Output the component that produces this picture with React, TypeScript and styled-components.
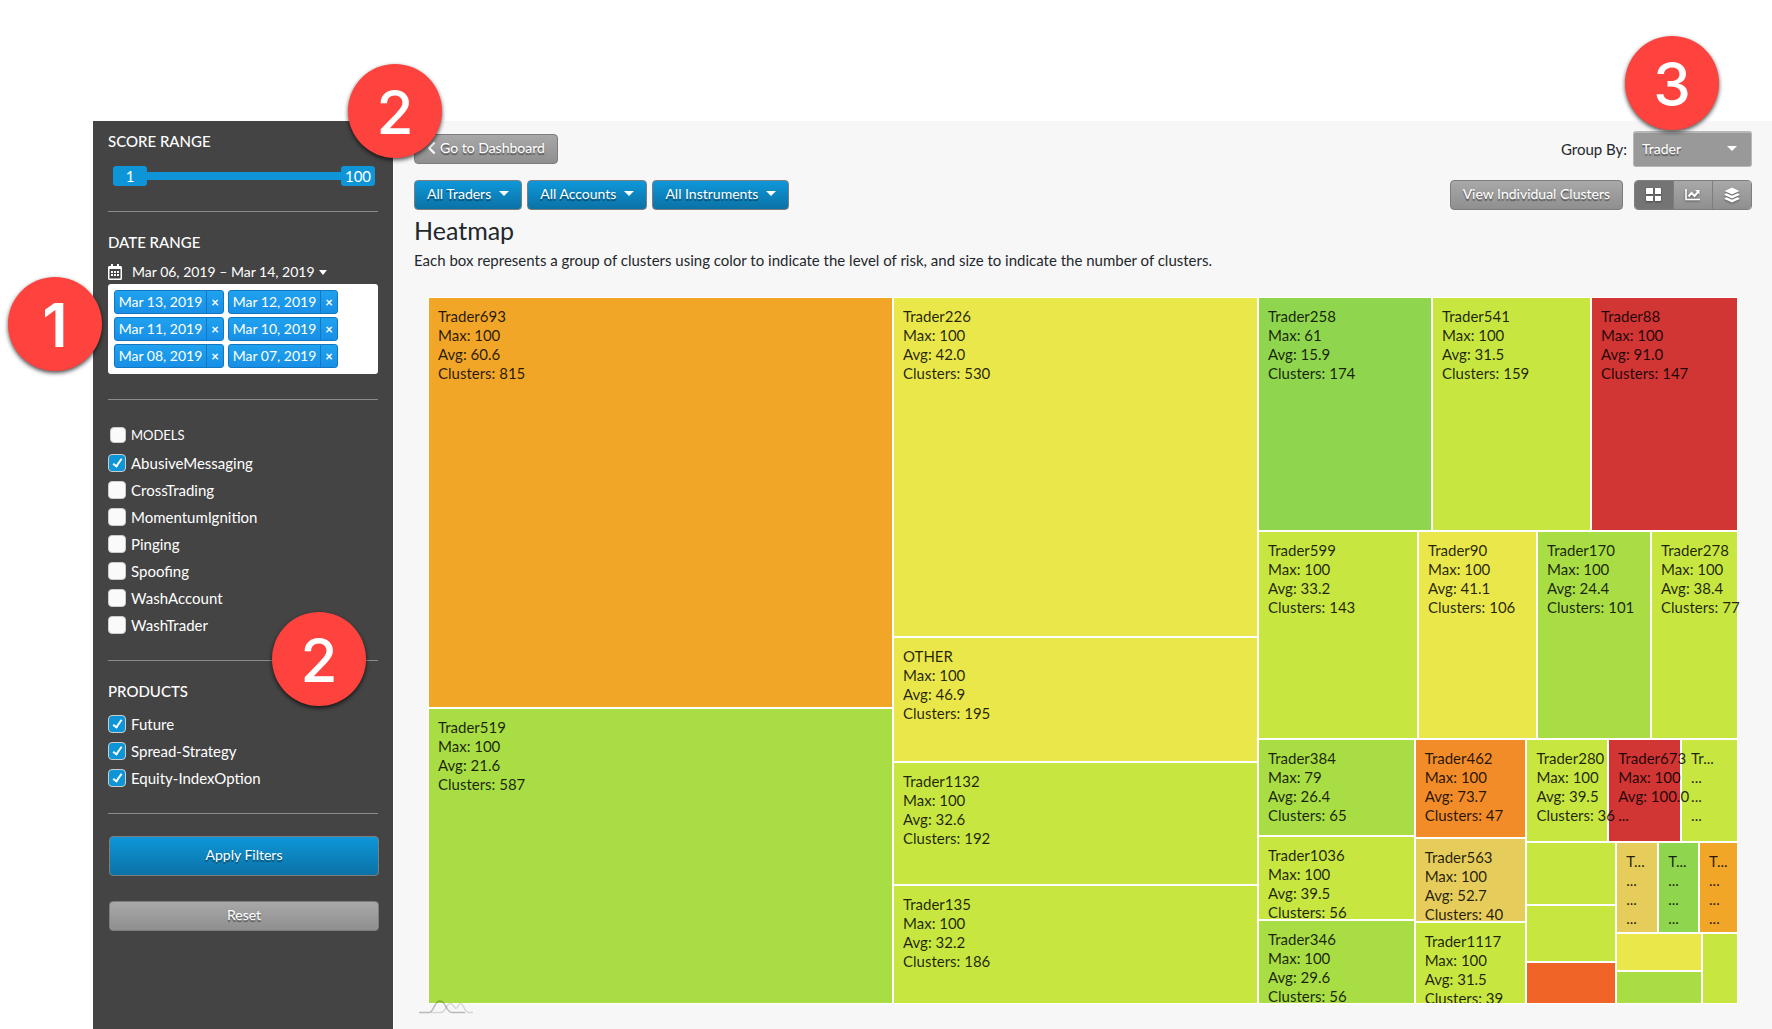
import React, { useState } from "react";
import styled, { createGlobalStyle, css } from "styled-components";
import { FaChevronLeft, FaRegCalendarAlt } from "react-icons/fa";

const GlobalStyle = createGlobalStyle`
  *, *::before, *::after { box-sizing: border-box; }
  body {
    margin: 0;
    background: #fff;
    color: #1f282c;
    font: 16px/20px Lato, "Open Sans", sans-serif;
  }
  button, input, select { font: inherit; }
`;

const Page = styled.div`
  position: relative;
  display: flex;
  min-height: 100vh;
  padding: 121px 0 0 93px;
  overflow: hidden;
`;

/* ---------- sidebar ---------- */

const Sidebar = styled.aside`
  flex: 0 0 300px;
  padding: 10px 15px;
  background: #444;
  color: #fff;
`;

const Section = styled.section`
  padding-bottom: 25px;
  margin-bottom: 20px;
  border-bottom: 1px solid #8c8c8c;
`;

const SectionTitle = styled.h2`
  margin: 0;
  font-size: 15px;
  line-height: 20px;
  font-weight: 500;
`;

const RangeSlider = styled.div`
  position: relative;
  display: flex;
  align-items: center;
  justify-content: space-between;
  height: 20px;
  margin: 15px 3px 0 5px;
  &::before {
    content: "";
    position: absolute;
    inset: 6px 0;
    background: #0e95d7;
  }
`;

const RangeValue = styled.output`
  position: relative;
  width: 34px;
  border-radius: 3px;
  background: #0e95d7;
  text-align: center;
  font-size: 15px;
`;

const RangeInput = styled.input`
  position: absolute;
  inset: 0;
  width: 100%;
  margin: 0;
  opacity: 0;
  pointer-events: none;
  &::-webkit-slider-thumb { pointer-events: auto; }
`;

const DatePicker = styled.button`
  display: flex;
  align-items: center;
  margin: 10px 0 2px;
  padding: 0;
  border: 0;
  background: none;
  color: #fff;
  font-size: 14px;
  line-height: 20px;
`;

const CalendarIcon = styled(FaRegCalendarAlt)`
  width: 14px;
  height: 16px;
  margin-right: 10px;
`;

const Caret = styled.span`
  margin-left: 4px;
  border: 4px solid transparent;
  border-top: 5px solid currentColor;
  border-bottom: 0;
`;

const ChipBox = styled.ul`
  display: flex;
  flex-wrap: wrap;
  gap: 3px 4px;
  margin: 0;
  padding: 6px 30px 6px 6px;
  border-radius: 3px;
  background: #fff;
  list-style: none;
`;

const Chip = styled.li`
  display: flex;
  width: 110px;
  height: 24px;
  border: 1px solid #1278c4;
  border-radius: 3px;
  background: linear-gradient(#1fa2ee, #188fe6);
  font-size: 14px;
  line-height: 22px;
`;

const ChipText = styled.span`
  flex: 1;
  text-align: center;
  white-space: nowrap;
`;

const ChipRemove = styled.button`
  width: 17px;
  padding: 0;
  border: 0;
  border-left: 1px solid #1278c4;
  background: none;
  color: #fff;
  font-size: 13px;
  font-weight: 700;
  line-height: 20px;
`;

const ModelList = styled.div`
  padding-top: 5px;
`;

const OptionList = styled.div<{ $top: number }>`
  display: grid;
  row-gap: 7px;
  margin-top: ${(p) => p.$top}px;
`;

const Option = styled.label<{ $small?: boolean }>`
  display: flex;
  align-items: center;
  gap: 5px;
  padding-left: ${(p) => (p.$small ? 2 : 0)}px;
  font-size: ${(p) => (p.$small ? 13 : 15)}px;
  line-height: 20px;
`;

const CheckBox = styled.input<{ $small?: boolean }>`
  appearance: none;
  display: grid;
  place-items: center;
  width: ${(p) => (p.$small ? 16 : 18)}px;
  height: ${(p) => (p.$small ? 16 : 18)}px;
  margin: 0;
  border: 1px solid #ccc;
  border-radius: 4px;
  background: #fafafa;
  &:checked { background: #0e95d7; }
  &:checked::before {
    content: "";
    width: 5px;
    height: 10px;
    margin-bottom: 2px;
    border: solid #fff;
    border-width: 0 2px 2px 0;
    transform: rotate(35deg);
  }
`;

/* ---------- buttons ---------- */

const greyFace = "linear-gradient(#a8a8a8, #8f8f8f)";
const blueFace = "linear-gradient(#0e97d9, #0b72a6)";

const Button = styled.button<{ $primary?: boolean; $block?: boolean; $tall?: boolean }>`
  display: inline-flex;
  align-items: center;
  justify-content: center;
  height: ${(p) => (p.$tall ? 40 : 30)}px;
  padding: 0 12px 2px;
  border: 1px solid #7d7d7d;
  border-radius: 4px;
  background: ${(p) => (p.$primary ? blueFace : greyFace)};
  color: #fff;
  font-size: 14px;
  line-height: 20px;
  text-shadow: 0 2px 1px rgba(0, 0, 0, 0.45);
  white-space: nowrap;
  ${(p) =>
    p.$block &&
    css`
      width: 100%;
    `}
`;

const ButtonCaret = styled(Caret)`
  margin: 0 0 2px 8px;
  border-width: 5px 5px 0;
`;

const Actions = styled.div`
  display: grid;
  gap: 25px;
  padding: 2px 0 0 1px;
  margin-right: -1px;
`;

/* ---------- main column ---------- */

const Main = styled.main`
  flex: 1;
  min-width: 0;
  padding: 10px 20px 26px;
  border-left: 1px solid #fff;
  background: #f7f7f7;
`;

const Bar = styled.div<{ $first?: boolean }>`
  display: flex;
  align-items: center;
  justify-content: space-between;
  height: ${(p) => (p.$first ? 36 : 30)}px;
  margin-bottom: ${(p) => (p.$first ? 13 : 6)}px;
`;

const Cluster = styled.div<{ $gap: number }>`
  display: flex;
  align-items: center;
  gap: ${(p) => p.$gap}px;
`;

const BackIcon = styled(FaChevronLeft)`
  width: 9px;
  height: 14px;
  margin-right: 4px;
`;

const SelectWrap = styled.span`
  position: relative;
  &::after {
    content: "";
    position: absolute;
    right: 15px;
    top: 15px;
    border: 5px solid transparent;
    border-top-color: #fff;
    border-bottom: 0;
    pointer-events: none;
  }
`;

const GroupSelect = styled.select`
  appearance: none;
  display: block;
  width: 119px;
  height: 36px;
  padding: 0 24px 2px 8px;
  border: 1px solid #b8b8b8;
  border-top-width: 2px;
  border-radius: 3px;
  background: #999;
  color: #fff;
  font-size: 14px;
  text-shadow: 0 2px 1px rgba(0, 0, 0, 0.45);
`;

const GroupLabel = styled.label`
  font-size: 15px;
`;

const ViewGroup = styled.div`
  display: flex;
  width: 118px;
  height: 30px;
  border: 1px solid #7d7d7d;
  border-radius: 4px;
  overflow: hidden;
`;

const ViewButton = styled.button<{ $active?: boolean }>`
  display: grid;
  flex: 1;
  place-items: center;
  padding: 0;
  border: 0;
  background: ${(p) => (p.$active ? "#747474" : greyFace)};
  color: #fff;
  & + & { border-left: 1px solid #7d7d7d; }
  svg { filter: drop-shadow(0 1px 1px rgba(0, 0, 0, 0.4)); }
`;

const Title = styled.h1`
  margin: 0;
  font-size: 25px;
  line-height: 28px;
  font-weight: 400;
`;

const Lead = styled.p`
  margin: 6px 0 27px;
  font-size: 15px;
  line-height: 20px;
`;

/* ---------- treemap ---------- */

const Chart = styled.div`
  position: relative;
  margin: 0 14px;
`;

const Map = styled.div`
  display: flex;
  gap: 2px;
  height: 707px;
  padding: 1px;
  background: #fff;
`;

const Split = styled.div<{ $size: number; $column: boolean }>`
  display: flex;
  flex: ${(p) => p.$size} 1 0;
  flex-direction: ${(p) => (p.$column ? "column" : "row")};
  gap: 2px;
  min-width: 0;
  min-height: 0;
`;

const Cell = styled.div<{ $size: number; $fill: string }>`
  flex: ${(p) => p.$size} 1 0;
  min-width: 0;
  min-height: 0;
  overflow-x: visible;
  overflow-y: clip;
  background: ${(p) => p.$fill};
`;

const CellText = styled.div`
  position: relative;
  z-index: 1;
  padding: 9px 0 0 9px;
  color: rgba(0, 0, 0, 0.85);
  font-size: 15px;
  line-height: 19px;
  white-space: nowrap;
`;

const ChartMark = styled.svg`
  position: absolute;
  z-index: 2;
  left: -9px;
  bottom: -10px;
  width: 54px;
  height: 14px;
`;

/* ---------- step markers ---------- */

const Marker = styled.span<{ $top: number; $left?: number; $right?: number; $heavy?: boolean }>`
  position: absolute;
  z-index: 5;
  top: ${(p) => p.$top}px;
  ${(p) => (p.$left !== undefined ? `left: ${p.$left}px;` : `right: ${p.$right}px;`)}
  width: 94px;
  height: 94px;
  border-radius: 50%;
  background: #fe423d;
  box-shadow: 0 2px 4px rgba(0, 0, 0, 0.7);
  color: #fff;
  font: ${(p) => (p.$heavy ? 600 : 500)} 60px/96px Inter, sans-serif;
  text-align: center;
`;

/* ---------- data ---------- */

const C = {
  orange: "#f1a628",
  yellow: "#eae74a",
  green: "#8fd54d",
  lime: "#a8dd44",
  chartreuse: "#c8e640",
  red: "#d13534",
  deepOrange: "#f28c28",
  sand: "#e6cc5b",
  flame: "#f06427",
};

type Leaf = { size: number; fill: string; lines: string[] };
type Group = { size: number; kids: Node[] };
type Node = Leaf | Group;

const box = (size: number, fill: string, name?: string, max?: string, avg?: string, n?: string): Leaf => ({
  size,
  fill,
  lines: name ? [name, `Max: ${max}`, `Avg: ${avg}`, `Clusters: ${n}`] : [],
});
const cut = (size: number, fill: string, ...lines: string[]): Leaf => ({ size, fill, lines });
const group = (size: number, ...kids: Node[]): Group => ({ size, kids });

const heatmap: Node[] = [
  group(
    463,
    box(409, C.orange, "Trader693", "100", "60.6", "815"),
    box(294, C.lime, "Trader519", "100", "21.6", "587")
  ),
  group(
    363,
    box(338, C.yellow, "Trader226", "100", "42.0", "530"),
    box(122, C.yellow, "OTHER", "100", "46.9", "195"),
    box(121, C.chartreuse, "Trader1132", "100", "32.6", "192"),
    box(117, C.chartreuse, "Trader135", "100", "32.2", "186")
  ),
  group(
    478,
    group(
      232,
      box(172, C.green, "Trader258", "61", "15.9", "174"),
      box(157, C.chartreuse, "Trader541", "100", "31.5", "159"),
      box(145, C.red, "Trader88", "100", "91.0", "147")
    ),
    group(
      207,
      box(158, C.chartreuse, "Trader599", "100", "33.2", "143"),
      box(117, C.yellow, "Trader90", "100", "41.1", "106"),
      box(112, C.lime, "Trader170", "100", "24.4", "101"),
      box(85, C.chartreuse, "Trader278", "100", "38.4", "77")
    ),
    group(
      263,
      group(
        155,
        box(95, C.lime, "Trader384", "79", "26.4", "65"),
        box(82, C.chartreuse, "Trader1036", "100", "39.5", "56"),
        box(82, C.lime, "Trader346", "100", "29.6", "56")
      ),
      group(
        110,
        box(97, C.deepOrange, "Trader462", "100", "73.7", "47"),
        box(82, C.sand, "Trader563", "100", "52.7", "40"),
        box(80, C.chartreuse, "Trader1117", "100", "31.5", "39")
      ),
      group(
        210,
        group(
          101,
          box(80, C.chartreuse, "Trader280", "100", "39.5", "36"),
          cut(71, C.red, "Trader673", "Max: 100", "Avg: 100.0", "..."),
          cut(55, C.chartreuse, "Tr...", "...", "...", "...")
        ),
        group(
          160,
          group(88, box(61, C.chartreuse), box(55, C.chartreuse), box(40, C.flame)),
          group(
            120,
            group(
              89,
              cut(40, C.sand, "T...", "...", "...", "..."),
              cut(39, C.green, "T...", "...", "...", "..."),
              cut(37, C.orange, "T...", "...", "...", "...")
            ),
            group(69, group(84, box(36, C.yellow), box(31, C.lime)), box(34, C.chartreuse))
          )
        )
      )
    )
  ),
];

function renderNode(node: Node, key: number, column: boolean): React.ReactNode {
  if ("kids" in node) {
    return (
      <Split key={key} $size={node.size} $column={column}>
        {node.kids.map((kid, i) => renderNode(kid, i, !column))}
      </Split>
    );
  }
  return (
    <Cell key={key} $size={node.size} $fill={node.fill}>
      {node.lines.length > 0 && (
        <CellText>
          {node.lines.map((line, i) => (
            <div key={i}>{line}</div>
          ))}
        </CellText>
      )}
    </Cell>
  );
}

const dates = ["Mar 13, 2019", "Mar 12, 2019", "Mar 11, 2019", "Mar 10, 2019", "Mar 08, 2019", "Mar 07, 2019"];
const models = ["AbusiveMessaging", "CrossTrading", "MomentumIgnition", "Pinging", "Spoofing", "WashAccount", "WashTrader"];
const products = ["Future", "Spread-Strategy", "Equity-IndexOption"];

export default function App() {
  const [low, setLow] = useState(1);
  const [high, setHigh] = useState(100);

  return (
    <Page>
      <GlobalStyle />
      <Sidebar>
        <Section>
          <SectionTitle>SCORE RANGE</SectionTitle>
          <RangeSlider>
            <RangeValue>{low}</RangeValue>
            <RangeValue>{high}</RangeValue>
            <RangeInput type="range" aria-label="Lowest score" min={1} max={100} value={low} onChange={(e) => setLow(+e.target.value)} />
            <RangeInput type="range" aria-label="Highest score" min={1} max={100} value={high} onChange={(e) => setHigh(+e.target.value)} />
          </RangeSlider>
        </Section>

        <Section>
          <SectionTitle>DATE RANGE</SectionTitle>
          <DatePicker type="button">
            <CalendarIcon />
            Mar 06, 2019 – Mar 14, 2019
            <Caret />
          </DatePicker>
          <ChipBox>
            {dates.map((date) => (
              <Chip key={date}>
                <ChipText>{date}</ChipText>
                <ChipRemove type="button" aria-label={`Remove ${date}`}>×</ChipRemove>
              </Chip>
            ))}
          </ChipBox>
        </Section>

        <Section>
          <ModelList>
            <Option $small>
              <CheckBox $small type="checkbox" />
              MODELS
            </Option>
            <OptionList $top={8}>
              {models.map((name, i) => (
                <Option key={name}>
                  <CheckBox type="checkbox" defaultChecked={i === 0} />
                  {name}
                </Option>
              ))}
            </OptionList>
          </ModelList>
        </Section>

        <Section>
          <SectionTitle>PRODUCTS</SectionTitle>
          <OptionList $top={13}>
            {products.map((name) => (
              <Option key={name}>
                <CheckBox type="checkbox" defaultChecked />
                {name}
              </Option>
            ))}
          </OptionList>
        </Section>

        <Actions>
          <Button type="button" $primary $block $tall>Apply Filters</Button>
          <Button type="button" $block>Reset</Button>
        </Actions>
      </Sidebar>

      <Main>
        <Bar $first>
          <Button type="button">
            <BackIcon />
            Go to Dashboard
          </Button>
          <Cluster $gap={6}>
            <GroupLabel htmlFor="group-by">Group By:</GroupLabel>
            <SelectWrap>
              <GroupSelect id="group-by" defaultValue="Trader">
                <option>Trader</option>
              </GroupSelect>
            </SelectWrap>
          </Cluster>
        </Bar>
        <Bar>
          <Cluster $gap={5}>
            {["All Traders", "All Accounts", "All Instruments"].map((text) => (
              <Button key={text} type="button" $primary>
                {text}
                <ButtonCaret />
              </Button>
            ))}
          </Cluster>
          <Cluster $gap={11}>
            <Button type="button">View Individual Clusters</Button>
            <ViewGroup>
              <ViewButton type="button" aria-label="Heatmap" $active>
                <svg width="16" height="14" viewBox="0 0 16 14" fill="currentColor">
                  <path d="M1 0h6v6H0V1a1 1 0 0 1 1-1zM9 0h5a1 1 0 0 1 1 1v5H9zM0 8h7v5H1a1 1 0 0 1-1-1zM9 8h6v4a1 1 0 0 1-1 1H9z" />
                </svg>
              </ViewButton>
              <ViewButton type="button" aria-label="Line chart">
                <svg width="16" height="14" viewBox="0 0 16 14" fill="none" stroke="currentColor">
                  <path d="M1 1v10.500h14" strokeWidth="1.600" />
                  <path d="M3.500 8.500l3-3.500 3 3 3.500-4" strokeWidth="2" />
                  <path d="M10 2h4.500v4.500z" fill="currentColor" stroke="none" />
                </svg>
              </ViewButton>
              <ViewButton type="button" aria-label="Layers">
                <svg width="16" height="16" viewBox="0 0 16 16" fill="currentColor">
                  <path d="M8 0.500l7.500 3.500L8 7.500 0.500 4z" />
                  <path d="M0.500 7.200l2-1L8 8.800l5.500-2.600 2 1v.8L8 11.500.5 8z" />
                  <path d="M0.500 11.200l2-1L8 12.800l5.500-2.600 2 1v.8L8 15.500.5 12z" />
                </svg>
              </ViewButton>
            </ViewGroup>
          </Cluster>
        </Bar>
        <Title>Heatmap</Title>
        <Lead>
          Each box represents a group of clusters using color to indicate the level of risk, and size to indicate the number of clusters.
        </Lead>
        <Chart>
          <Map>{heatmap.map((node, i) => renderNode(node, i, true))}</Map>
          <ChartMark viewBox="0 0 54 14" fill="none">
            <path d="M12 12.500h10c5 0 5-9 9-9s4 5 6 5 2-5 4-5c4 0 4 9 9 9h4" stroke="#000" strokeOpacity="0.130" strokeWidth="1.500" />
            <path d="M0 12.500h10c5 0 5-11.500 11-11.500s6 11.500 12 11.500h13" stroke="#000" strokeOpacity="0.250" strokeWidth="1.500" />
          </ChartMark>
        </Chart>
      </Main>

      <Marker $top={277} $left={8} $heavy>1</Marker>
      <Marker $top={64} $left={348}>2</Marker>
      <Marker $top={612} $left={272}>2</Marker>
      <Marker $top={36} $right={53}>3</Marker>
    </Page>
  );
}
